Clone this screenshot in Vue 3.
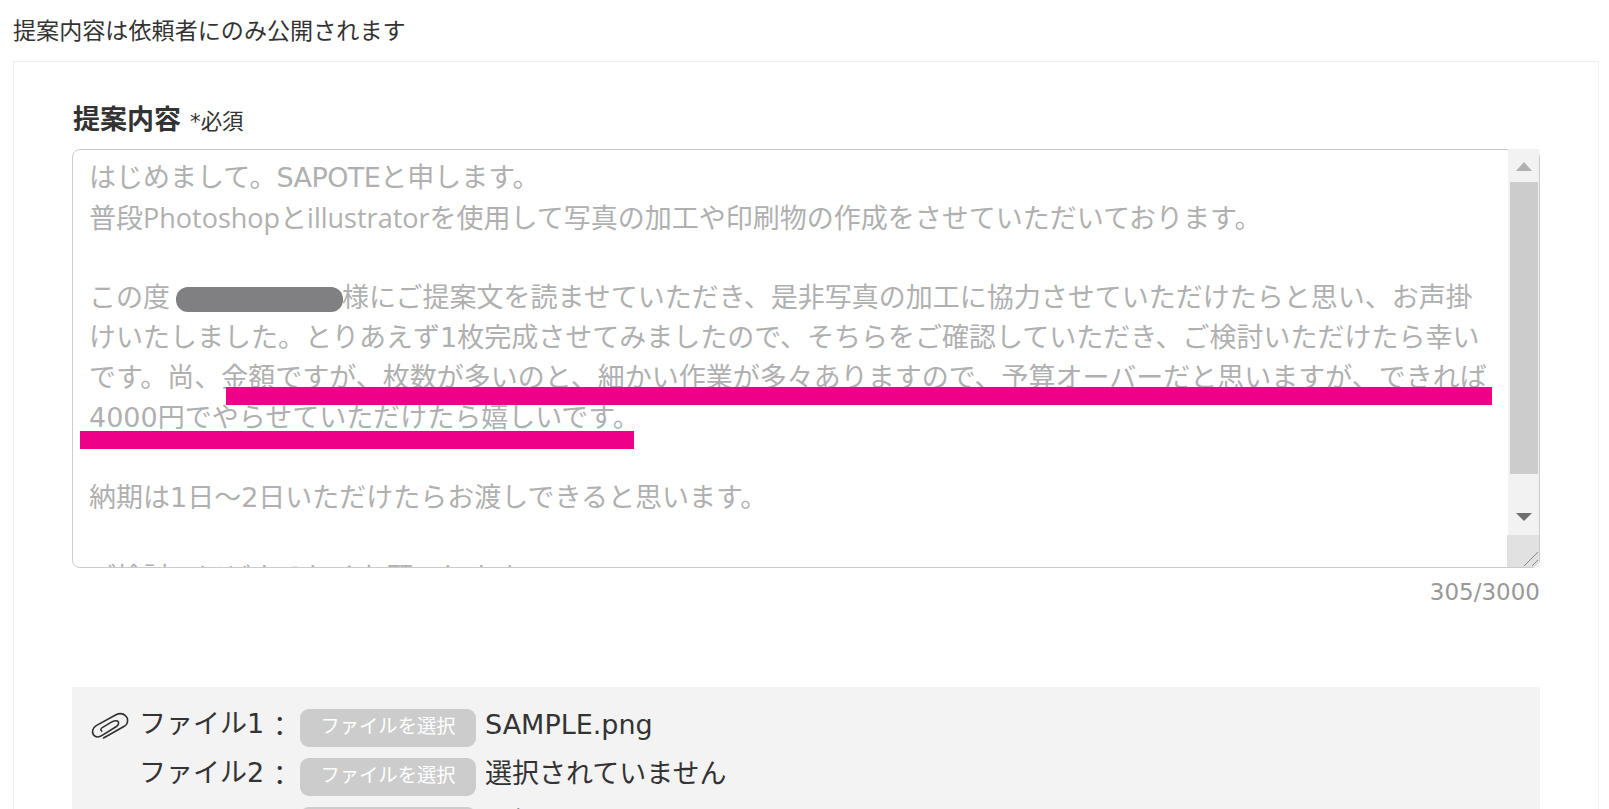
<script setup>
const t = (text, cls = '') => ({ text, cls })
const lines = [
  [t('はじめまして。'), t('SAPOTE', 'caps'), t('と申します。')],
  [t('普段'), t('Photoshop', 'latin'), t('と'), t('illustrator', 'latin'), t('を使用して写真の加工や印刷物の作成をさせていただいております。')],
  [t('\u00a0')],
  [t('この度'), t('', 'name-gap'), t('様にご提案文を読ませていただき、是非写真の加工に協力させていただけたらと思い、お声掛')],
  [t('けいたしました。とりあえず1枚完成させてみましたので、そちらをご確認していただき、ご検討いただけたら幸い')],
  [t('です。尚、金額ですが、枚数が多いのと、細かい作業が多々ありますので、予算オーバーだと思いますが、できれば')],
  [t('4000円でやらせていただけたら嬉しいです。')],
  [t('\u00a0')],
  [t('納期は1日～2日いただけたらお渡しできると思います。')],
  [t('\u00a0')],
  [t('ご検討のほどよろしくお願いします。')],
]
const files = [
  { label: 'ファイル1', name: 'SAMPLE.png' },
  { label: 'ファイル2', name: '選択されていません' },
  { label: 'ファイル3', name: '選択されていません' },
]
</script>

<template>
  <div class="page">
    <p class="notice">提案内容は依頼者にのみ公開されます</p>
    <section class="card">
      <div class="label-row">
        <span class="label">提案内容</span>
        <span class="required">*必須</span>
      </div>
      <div class="box">
        <div class="text">
          <div v-for="(line, i) in lines" :key="i" class="line">
            <span v-for="(seg, j) in line" :key="j" :class="seg.cls">{{ seg.text }}</span>
          </div>
        </div>
        <div class="scrollbar">
          <div class="arrow-zone"><span class="tri up"></span></div>
          <div class="thumb"></div>
          <div class="track-rest"><span class="tri down"></span></div>
          <div class="corner">
            <svg width="16" height="16" viewBox="0 0 16 16">
              <path d="M1 15 L15 1 M9 15 L15 9" stroke="#888" stroke-width="1" fill="none" />
            </svg>
          </div>
        </div>
        <span class="redact"></span>
        <span class="mark mark-a"></span>
        <span class="mark mark-b"></span>
      </div>
      <div class="counter">305/3000</div>
      <div class="files">
        <svg class="clip" width="46" height="37" viewBox="0 0 50 40" fill="none" stroke="#2f2f2f" stroke-width="1.7" stroke-linecap="round">
          <path d="M18 32.5 L41 19.5 C45 17 45 11 42 8.5 C39 5.5 35 5.5 31 7.5 L10 19 C6 21.5 5 26 7 29 C9 32 13 32 16 30 L32 20 C35 18 35 15 33 14 C31 13 29 14 27 15 L17 21 C15 22 14.5 24 16 25" />
        </svg>
        <div class="file-list">
          <div v-for="f in files" :key="f.label" class="file-row">
            <span class="file-label">{{ f.label }}<span class="colon">：</span></span>
            <span class="file-btn">ファイルを選択</span>
            <span class="file-name">{{ f.name }}</span>
          </div>
        </div>
      </div>
    </section>
  </div>
</template>

<style>
html, body { margin: 0; background: #fff; overflow: hidden; }
</style>

<style scoped>
.page {
  height: 809px;
  overflow: hidden;
  box-sizing: border-box;
  padding: 14px 10px 0 13px;
  font-family: "DejaVu Sans", "Noto Sans CJK JP", sans-serif;
  color: #333;
}
.notice { margin: 0 0 13px; font-size: 23.1px; line-height: 34px; font-weight: 400; }
.card {
  border: 1px solid #eee;
  padding: 38px 58px 40px;
}
.label-row { display: flex; align-items: baseline; gap: 9px; margin-bottom: 9px; height: 40px; padding-left: 1px; }
.label { font-size: 27px; font-weight: 700; line-height: 40px; }
.required { font-size: 21.4px; line-height: 40px; }
.box {
  position: relative;
  display: flex;
  height: 419px;
  box-sizing: border-box;
  border: 1px solid #ccc;
  border-radius: 8px;
}
.text {
  flex: 1;
  min-width: 0;
  padding: 8px 16px 0;
  color: #b0b0b0;
  font-size: 27px;
  line-height: 40px;
  overflow: hidden;
  border-radius: 8px 0 0 8px;
}
.line { white-space: nowrap; height: 40px; }
.caps { letter-spacing: -0.55px; }
.latin { font-family: "Open Sans", "DejaVu Sans", sans-serif; }
.name-gap { display: inline-block; width: 172px; }
.scrollbar {
  width: 31px;
  flex: none;
  display: flex;
  flex-direction: column;
  background: #f2f2f2;
  margin-top: -1px;
}
.arrow-zone { height: 33px; box-sizing: border-box; padding-top: 13px; display: flex; align-items: flex-start; justify-content: center; }
.thumb { height: 292px; margin: 0 1px 0 2px; background: #ccc; }
.track-rest { flex: 1; display: flex; align-items: flex-start; justify-content: center; padding-top: 39px; box-sizing: border-box; }
.tri { width: 0; height: 0; border-left: 8px solid transparent; border-right: 8px solid transparent; }
.tri.up { border-bottom: 9px solid #b0b0b0; }
.tri.down { border-top: 8px solid #6e6e6e; }
.corner {
  height: 32px;
  background: #e1e1e1;
  margin-left: -1px;
  border-bottom-right-radius: 7px;
  display: flex;
  align-items: flex-end;
  justify-content: flex-end;
}
.corner svg { display: block; }
.redact {
  position: absolute;
  left: 103px;
  top: 137px;
  width: 167px;
  height: 25px;
  border-radius: 12px;
  background: #808083;
}
.mark { position: absolute; background: #ee0088; height: 18px; }
.mark-a { left: 153px; top: 237px; width: 1266px; }
.mark-b { left: 7px; top: 281px; width: 554px; }
.counter { text-align: right; font-size: 23px; line-height: 34px; color: #999; margin: 7px 0 78px; }
.files {
  display: flex;
  background: #f3f3f3;
  padding: 22px 20px 20px 13px;
  gap: 6px;
}
.clip { margin: -1px 0 0 2px; flex: none; }
.file-list { display: flex; flex-direction: column; gap: 11px; }
.file-row { display: flex; align-items: center; height: 38px; }
.file-label { width: 161px; font-size: 27px; line-height: 34px; padding-bottom: 6px; white-space: nowrap; }
.colon { margin-left: 2px; vertical-align: -3px; }
.file-btn {
  width: 176px;
  height: 38px;
  line-height: 36px;
  border-radius: 9px;
  background: #ccc;
  color: #fff;
  font-size: 19.3px;
  text-align: center;
  flex: none;
}
.file-name { margin-left: 9px; font-size: 27px; line-height: 34px; padding-bottom: 6px; white-space: nowrap; }
</style>
